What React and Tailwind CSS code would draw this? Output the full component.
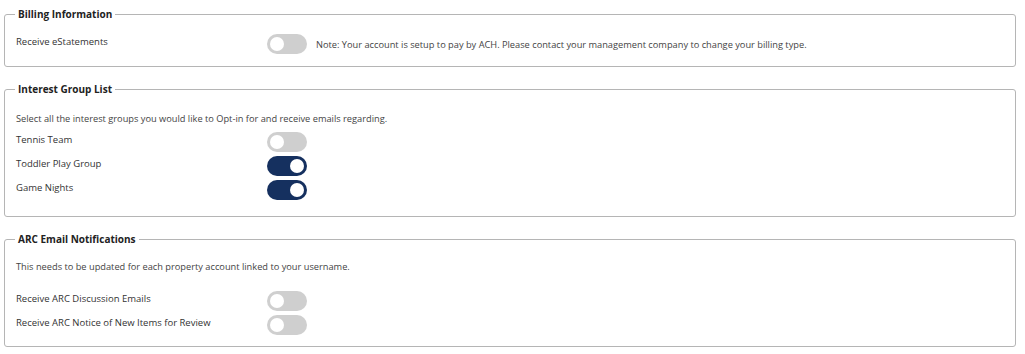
import React from 'react';

const Toggle = ({ on }) => (
  <div className={`w-[40px] h-[20px] rounded-full flex items-center px-[3px] shrink-0 ${on ? 'bg-[#15305f] justify-end' : 'bg-[#cfcfcf] justify-start'}`}>
    <div className="w-[14px] h-[14px] rounded-full bg-white"></div>
  </div>
);

const Row = ({ label, on, children }) => (
  <div className="flex items-start">
    <div className="w-[251px] shrink-0 pt-[1px] text-[9.5px] leading-[14px] text-[#333]">{label}</div>
    <Toggle on={on} />
    {children}
  </div>
);

const Section = ({ title, className, children }) => (
  <fieldset className={`border border-[#b5b5b5] rounded-[3px] pl-[11px] pr-[11px] ${className}`}>
    <legend className="-ml-[1px] px-[3px] text-[10px] leading-[14px] font-bold text-[#222]">{title}</legend>
    {children}
  </fieldset>
);

export default function App() {
  return (
    <div className="bg-white w-[1025px] h-[354px] px-[4px] pt-[7px] flex flex-col gap-[15px] font-['Open_Sans',sans-serif] pr-[9px]">
      <Section title="Billing Information" className="pt-[13px] pb-[12px]">
        <Row label="Receive eStatements" on={false}>
          <span className="ml-[9px] mt-[4px] text-[9.25px] leading-[13px] text-[#444]">
            Note: Your account is setup to pay by ACH. Please contact your management company to change your billing type.
          </span>
        </Row>
      </Section>

      <Section title="Interest Group List" className="pt-[16px] pb-[16px]">
        <div className="text-[9.25px] leading-[13px] text-[#444] mb-[7px]">Select all the interest groups you would like to Opt-in for and receive emails regarding.</div>
        <div className="flex flex-col gap-[4px]">
          <Row label="Tennis Team" on={false} />
          <Row label="Toddler Play Group" on={true} />
          <Row label="Game Nights" on={true} />
        </div>
      </Section>

      <Section title="ARC Email Notifications" className="pt-[14px] pb-[11px]">
        <div className="text-[9.25px] leading-[13px] text-[#444] mb-[18px]">This needs to be updated for each property account linked to your username.</div>
        <div className="flex flex-col gap-[4px]">
          <Row label="Receive ARC Discussion Emails" on={false} />
          <Row label="Receive ARC Notice of New Items for Review" on={false} />
        </div>
      </Section>
    </div>
  );
}
